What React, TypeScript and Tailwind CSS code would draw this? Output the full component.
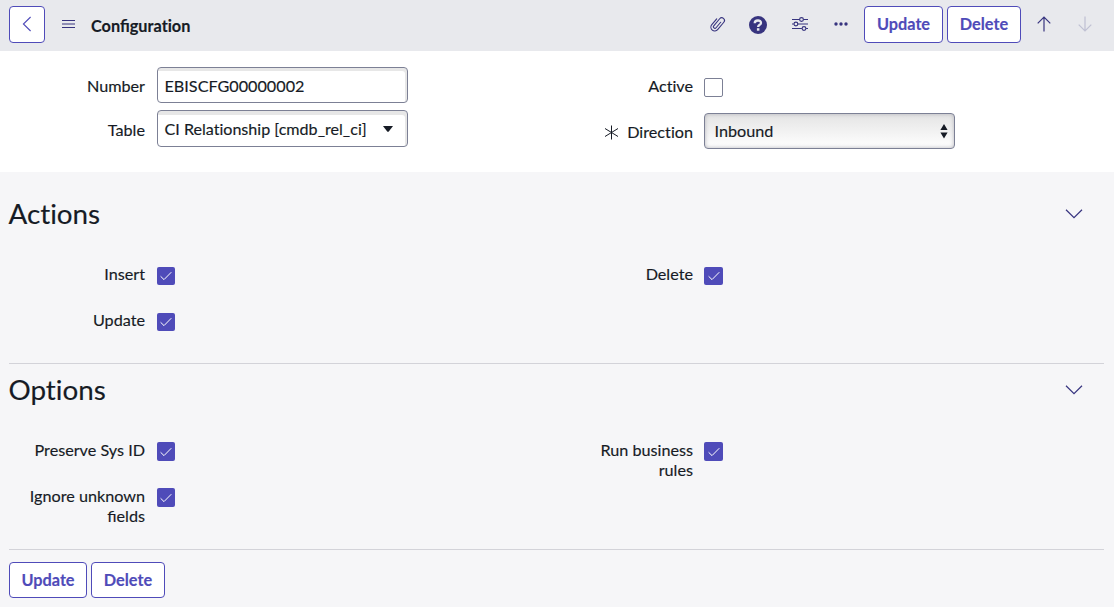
import type { ReactNode } from "react";

function Button({ children, className }: { children: ReactNode; className: string }) {
  return (
    <button
      className={`flex shrink-0 items-center justify-center rounded-[4px] border border-[#4f4bb9] bg-white text-[16.3px] leading-5 font-bold text-[#4f4bb9] ${className}`}
    >
      {children}
    </button>
  );
}

function Field({
  label,
  className = "",
  wide = false,
  children,
}: {
  label: ReactNode;
  className?: string;
  wide?: boolean;
  children: ReactNode;
}) {
  return (
    <div className={`flex items-start ${className}`}>
      <div className={`flex shrink-0 justify-end text-right ${wide ? "mr-[11px] w-[137px]" : "mr-3 w-[136px]"}`}>
        {label}
      </div>
      {children}
    </div>
  );
}

function Checkbox({ checked = false, className = "" }: { checked?: boolean; className?: string }) {
  return (
    <span
      role="checkbox"
      aria-checked={checked}
      className={`flex shrink-0 items-center justify-center rounded-[2px] ${
        checked ? "bg-[#4f4bb9]" : "border border-[#7c8095] bg-white"
      } ${className}`}
    >
      {checked && (
        <svg width="18" height="18" viewBox="0 0 18 18" fill="none" stroke="#fff" strokeWidth="1">
          <path d="M3.6 9.3 L7 12.6 L14.3 5.2" />
        </svg>
      )}
    </span>
  );
}

function SectionHeading({ title }: { title: string }) {
  return (
    <div className="flex items-center justify-between pr-[21px]">
      <h2 className="-ml-[0.5px] text-[27.8px] leading-8 text-[#161b25]">{title}</h2>
      <svg width="18" height="10" viewBox="0 0 18 10" fill="none" stroke="#37347f" strokeWidth="1.2">
        <path d="M1 0.8 L9 8.6 L17 0.8" />
      </svg>
    </div>
  );
}

function Header() {
  return (
    <header className="flex h-[51px] items-start bg-[#e8e9ed] pt-[6px] pl-[9px]">
      <Button className="h-[37px] w-9">
        <svg className="-mt-px" width="10" height="16" viewBox="0 0 10 16" fill="none" stroke="#4f4bb9" strokeWidth="1.1">
          <path d="M8.6 1 L1.4 8 L8.6 15" />
        </svg>
      </Button>
      <svg className="mt-[13px] ml-[17px]" width="13" height="10" viewBox="0 0 13 10" stroke="#37347f" strokeWidth="1.2">
        <path d="M0 1.5H13M0 5H13M0 8.5H13" />
      </svg>
      <h1 className="mt-[10px] ml-4 text-[16.3px] leading-5 font-bold">
        <span className="[font-variant-ligatures:normal]">Confi</span>guration
      </h1>
      <div className="ml-auto flex items-start text-[#37347f]">
        <svg className="mt-[9px]" width="17" height="18" viewBox="0 0 17 18" fill="none" stroke="currentColor" strokeWidth="1.1" strokeLinecap="round">
          <path
            transform="rotate(40 8.5 9)"
            d="M4.6 5.6V13.2a3.8 3.8 0 0 0 7.6 0V3.6a2.7 2.7 0 0 0 -5.4 0V12.8a1.5 1.5 0 0 0 3 0V5.6"
          />
        </svg>
        <svg className="mt-[10px] ml-[23px]" width="18" height="18" viewBox="0 0 18 18" fill="none">
          <circle cx="9" cy="9" r="9" fill="currentColor" />
          <path d="M5.7 7.2 C5.7 3.7 12 3.6 12 6.9 C12 8.9 9.1 8.7 9.1 11" stroke="#e8e9ed" strokeWidth="2.3" />
          <rect x="7.9" y="12.2" width="2.5" height="2.5" fill="#e8e9ed" />
        </svg>
        <svg className="mt-[10px] ml-6" width="18" height="16" viewBox="0 0 18 16" fill="none" stroke="currentColor" strokeWidth="1.15">
          <path d="M1 3.5H8.4M12.6 3.5H17M1 8H2.8M7 8H17M1 12.5H10.9M15.1 12.5H17" />
          <circle cx="10.5" cy="3.5" r="1.9" />
          <circle cx="4.9" cy="8" r="1.9" />
          <circle cx="13" cy="12.5" r="1.9" />
        </svg>
        <svg className="mt-4 ml-[25px]" width="14" height="4" viewBox="0 0 14 4" fill="currentColor">
          <circle cx="2" cy="2" r="1.7" />
          <circle cx="7" cy="2" r="1.7" />
          <circle cx="12" cy="2" r="1.7" />
        </svg>
        <Button className="ml-4 h-[37px] w-[79px] pb-[2px]">Update</Button>
        <Button className="ml-1 h-[37px] w-[74px] pb-[2px]">Delete</Button>
        <svg className="mt-[10px] ml-4" width="14" height="16" viewBox="0 0 14 16" fill="none" stroke="currentColor" strokeWidth="1.2">
          <path d="M7 15.5V1M0.7 7.3L7 1L13.3 7.3" />
        </svg>
        <svg className="mt-[10px] mr-[22px] ml-[27px]" width="14" height="16" viewBox="0 0 14 16" fill="none" stroke="#bfc0d3" strokeWidth="1.2">
          <path d="M7 0.5V15M0.7 8.7L7 15L13.3 8.7" />
        </svg>
      </div>
    </header>
  );
}

export default function App() {
  return (
    <main className="h-[607px] w-[1114px] overflow-hidden bg-[#f6f6f8] font-['Lato',sans-serif] text-[16.2px] leading-5 text-[#161b25] [-webkit-text-stroke:0.15px] [font-variant-ligatures:none]">
      <Header />

      <section className="grid h-[121px] grid-cols-[547px_1fr] bg-white pt-4 pl-[9px]">
        <div>
          <Field className="h-9" label={<span className="mt-[9px]">Number</span>}>
            <div className="flex h-9 w-[251px] items-center rounded-[4px] border border-[#7c8095] pl-[6.5px] shadow-[inset_-2px_3px_0_#e7e7e7]">
              <span className="mt-[2px]">EBISCFG00000002</span>
            </div>
          </Field>
          <Field className="mt-[7px]" label={<span className="mt-[10px]">Table</span>}>
            <div className="flex h-[37px] w-[251px] items-center justify-between rounded-[4px] border border-[#7c8095] pr-[14px] pl-[6.5px] shadow-[inset_-2px_4px_0_#e7e7e7]">
              <span className="text-[16.1px]">CI Relationship [cmdb_rel_ci]</span>
              <svg width="10" height="6" viewBox="0 0 10 6" fill="#161b25">
                <path d="M0 0H10L5.8 5.4Q5 6 4.2 5.4Z" />
              </svg>
            </div>
          </Field>
        </div>
        <div>
          <Field wide className="h-[46px]" label={<span className="mt-[9px]">Active</span>}>
            <Checkbox className="mt-[11px] size-[19px]" />
          </Field>
          <Field
            wide
            label={
              <span className="mt-[9px] flex items-center gap-2">
                <svg width="15" height="15" viewBox="0 0 15 15" fill="none" stroke="#161b25" strokeWidth="1">
                  <path d="M7.5 0.5V14.5M1 3.5L14 11.5M14 3.5L1 11.5" />
                </svg>
                Direction
              </span>
            }
          >
            <div className="flex h-9 w-[251px] items-center justify-between rounded-[4px] border border-[#7c8095] bg-linear-to-b from-[#e4e4e4] to-white pr-[6px] pl-[9.5px] shadow-[inset_0_0_4px_#b5b5bb]">
              <span>Inbound</span>
              <svg width="8" height="15" viewBox="0 0 8 15" fill="#161b25">
                <path d="M4 0L7.6 6H0.4ZM4 14.6L7.6 8.6H0.4Z" />
              </svg>
            </div>
          </Field>
        </div>
      </section>

      <section className="mr-[10px] ml-[9px] h-[192px] border-b border-[#d3d3d9] pt-[26px]">
        <SectionHeading title="Actions" />
        <div className="mt-[34px] grid grid-cols-[547px_1fr]">
          <div>
            <Field className="h-[46px]" label="Insert">
              <Checkbox checked className="mt-[3px] size-[18px]" />
            </Field>
            <Field className="h-[46px]" label="Update">
              <Checkbox checked className="mt-[3px] size-[18px]" />
            </Field>
          </div>
          <Field wide className="h-[46px]" label="Delete">
            <Checkbox checked className="mt-[3px] h-[18px] w-[19px]" />
          </Field>
        </div>
      </section>

      <section className="mr-[10px] ml-[9px] h-[186px] border-b border-[#d3d3d9] pt-[10px]">
        <SectionHeading title="Options" />
        <div className="mt-[34px] grid grid-cols-[547px_1fr]">
          <div>
            <Field className="h-[46px]" label="Preserve Sys ID">
              <Checkbox checked className="mt-[2px] h-[19px] w-[18px]" />
            </Field>
            <Field
              className="h-[46px]"
              label={<span className="w-[120px] [font-variant-ligatures:normal]">Ignore unknown fields</span>}
            >
              <Checkbox checked className="mt-[2px] h-[19px] w-[18px]" />
            </Field>
          </div>
          <Field wide className="h-[46px]" label={<span className="w-[110px]">Run business rules</span>}>
            <Checkbox checked className="mt-[2px] size-[19px]" />
          </Field>
        </div>
      </section>

      <footer className="flex gap-1 pt-3 pl-[9px]">
        <Button className="h-9 w-[78px]">Update</Button>
        <Button className="h-9 w-[74px]">Delete</Button>
      </footer>
    </main>
  );
}
